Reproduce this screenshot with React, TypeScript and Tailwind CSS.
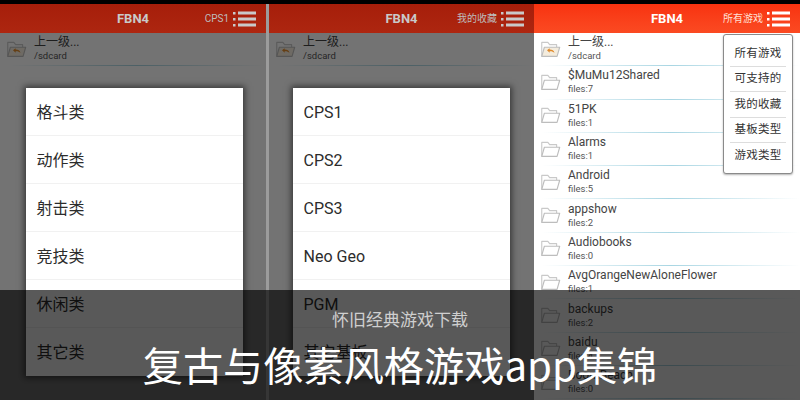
const uiFont = "font-['Roboto','Noto_Sans_CJK_SC',sans-serif]";

const files = [
  { name: "$MuMu12Shared", sub: "files:7" },
  { name: "51PK", sub: "files:1" },
  { name: "Alarms", sub: "files:1" },
  { name: "Android", sub: "files:5" },
  { name: "appshow", sub: "files:2" },
  { name: "Audiobooks", sub: "files:0" },
  { name: "AvgOrangeNewAloneFlower", sub: "files:1" },
  { name: "backups", sub: "files:2" },
  { name: "baidu", sub: "files:4" },
  { name: "BoomBeach", sub: "files:0" },
];

function FolderIcon({ back }: { back?: boolean }) {
  return (
    <svg width="21" height="18" viewBox="0 0 24 20" fill="none" className="shrink-0">
      <path
        d="M2 18.5V2.5h7l2 2.5h8v3"
        stroke="#c9c9c9"
        strokeWidth="1.3"
        strokeLinejoin="round"
      />
      <path
        d="M2 18.5h17.5L22.5 8H5z"
        stroke="#bdbdbd"
        strokeWidth="1.3"
        strokeLinejoin="round"
        fill={back ? "#f4ecdd" : "#ffffff"}
      />
      {back && (
        <path
          d="M8 11.5l3-2.5v1.6c3 0 5 .8 5.5 4-1.200-1.500-3-2-5.500-1.900v1.600z"
          fill="#e08a2c"
        />
      )}
    </svg>
  );
}

function Row({ name, sub, back }: { name: string; sub: string; back?: boolean }) {
  return (
    <div className="relative flex h-[33.3px] shrink-0 items-center gap-[7px] pb-[2px] pl-[6px]">
      <FolderIcon back={back} />
      <div className="flex min-w-0 flex-col">
        <span className="text-[12px] leading-[14px] text-[#444444]">{name}</span>
        <span className="text-[9.500px] leading-[13px] text-[#555555]">{sub}</span>
      </div>
      <div className="absolute right-0 bottom-0 left-[8px] h-px bg-gradient-to-r from-transparent via-[#a9d6e3] to-transparent" />
    </div>
  );
}

function Header({ label, bright }: { label: string; bright?: boolean }) {
  return (
    <div
      className={`relative flex h-[29px] shrink-0 items-center justify-center ${
        bright ? "bg-gradient-to-b from-[#f8320f] to-[#fb4a22]" : "bg-gradient-to-b from-[#a61e0a] to-[#ad2610]"
      }`}
    >
      <span className={`text-[13px] font-bold ${bright ? "text-white" : "text-[#c9c9c9]"}`}>FBN4</span>
      <div className="absolute top-0 right-[10px] flex h-full items-center gap-[4px]">
        <span className={`text-[10px] ${bright ? "text-[#ffe0d6]" : "text-[#bdbdbd]"}`}>{label}</span>
        <svg width="23" height="20" viewBox="0 0 23 20">
          <g fill={bright ? "#ffffff" : "#c9c9c9"}>
            <rect x="0" y="3" width="2.500" height="2.500" />
            <rect x="0" y="9" width="2.500" height="2.500" />
            <rect x="0" y="15" width="2.500" height="2.500" />
            <rect x="5" y="2.500" width="18" height="3" />
            <rect x="5" y="8.500" width="18" height="3" />
            <rect x="5" y="14.500" width="18" height="3" />
          </g>
        </svg>
      </div>
    </div>
  );
}

function Dialog({ items, className }: { items: string[]; className: string }) {
  return (
    <div className={`absolute top-[55px] w-[217px] bg-white shadow-[0_0_6px_2px_rgba(0,0,0,0.5)] ${className}`}>
      {items.map((item) => (
        <div
          key={item}
          className="flex h-[48px] items-center border-b border-[#f1f1f1] pt-[2px] pl-[10.5px] text-[16px] text-[#2c2c2c] last:border-b-0"
        >
          {item}
        </div>
      ))}
    </div>
  );
}

export default function App() {
  return (
    <div className={`relative flex h-[400px] w-[800px] flex-col overflow-hidden bg-white ${uiFont}`}>
      <div className="h-[4px] shrink-0 bg-black" />
      <div className="flex min-h-0 flex-1">
        <div className="flex h-full w-[269px] shrink-0 flex-col border-r-[3px] border-[#9c9c9c]">
          <Header label="CPS1" />
          <div className="relative flex-1 bg-white">
            <Row name="上一级..." sub="/sdcard" back />
            <div className="absolute inset-0 bg-black/55" />
            <Dialog className="left-[26px]" items={["格斗类", "动作类", "射击类", "竞技类", "休闲类", "其它类"]} />
          </div>
        </div>

        <div className="flex h-full w-[265px] shrink-0 flex-col">
          <Header label="我的收藏" />
          <div className="relative flex-1 bg-white">
            <Row name="上一级..." sub="/sdcard" back />
            <div className="absolute inset-0 bg-black/55" />
            <Dialog className="left-[24px]" items={["CPS1", "CPS2", "CPS3", "Neo Geo", "PGM", "其它基板"]} />
          </div>
        </div>

        <div className="relative flex h-full flex-1 flex-col">
          <Header label="所有游戏" bright />
          <div className="flex-1 overflow-hidden bg-white">
            <Row name="上一级..." sub="/sdcard" back />
            {files.map((f) => (
              <Row key={f.name} name={f.name} sub={f.sub} />
            ))}
          </div>

          <div className="absolute top-[30px] right-[7px] flex w-[70px] flex-col rounded-[3px] border border-[#8a8a8a] bg-white px-[6px] pt-[6px] pb-[4.500px] shadow-[0_1px_2px_rgba(0,0,0,0.3)]">
            {["所有游戏", "可支持的", "我的收藏", "基板类型", "游戏类型"].map((item) => (
              <div
                key={item}
                className="flex h-[25.500px] items-center justify-center border-b border-[#dddddd] text-[11.500px] tracking-[0.3px] text-[#333333] last:border-b-0"
              >
                {item}
              </div>
            ))}
          </div>
        </div>
      </div>

      {/* caption banner over the screenshots */}
      <div className="absolute right-0 bottom-0 left-0 flex h-[110px] flex-col items-center bg-black/65 pt-[18px]">
        <span className="text-[17px] leading-[24px] text-[#cfcfcf]">怀旧经典游戏下载</span>
        <span className="mt-[6px] font-['Noto_Sans_CJK_SC',sans-serif] text-[40.2px] leading-[52px] text-white">
          复古与像素风格游戏app集锦
        </span>
      </div>
    </div>
  );
}
